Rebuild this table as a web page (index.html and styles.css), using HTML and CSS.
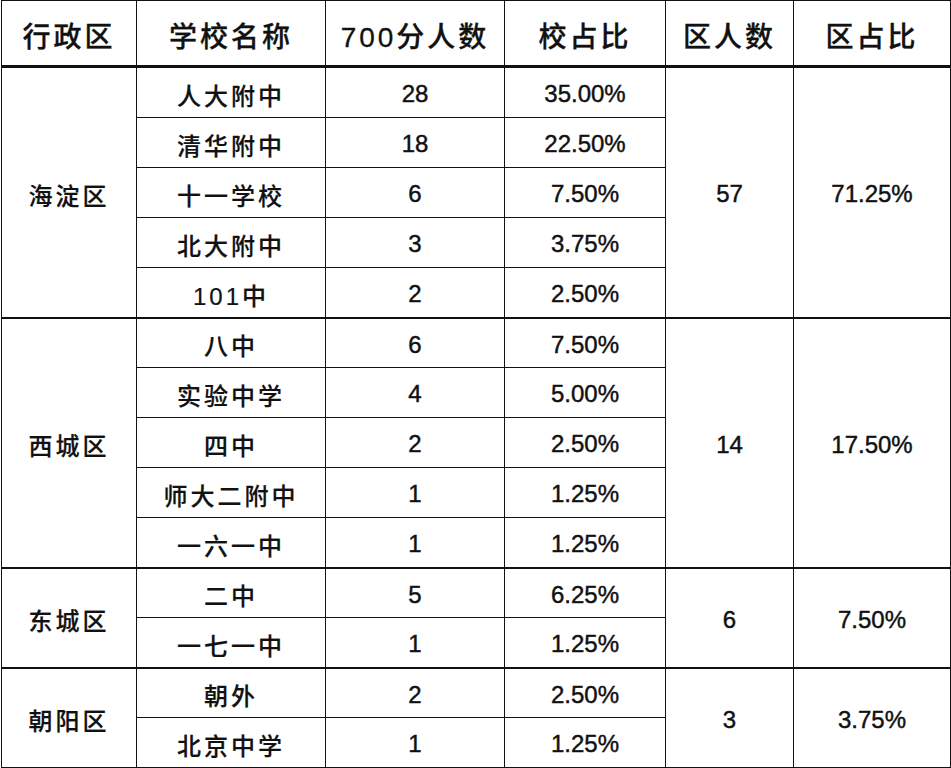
FILE: index.html
```html
<!DOCTYPE html>
<html lang="zh">
<head>
<meta charset="utf-8">
<link rel="stylesheet" href="styles.css">
</head>
<body>
<table class="stats">
  <colgroup>
    <col class="c1"><col class="c2"><col class="c3"><col class="c4"><col class="c5"><col class="c6">
  </colgroup>
  <thead>
    <tr class="head">
      <th>行政区</th><th>学校名称</th><th>700分人数</th><th>校占比</th><th>区人数</th><th>区占比</th>
    </tr>
  </thead>
  <tbody class="group">
    <tr><td rowspan="5" class="cjk">海淀区</td><td class="cjk">人大附中</td><td>28</td><td>35.00%</td><td rowspan="5">57</td><td rowspan="5">71.25%</td></tr>
    <tr><td class="cjk">清华附中</td><td>18</td><td>22.50%</td></tr>
    <tr><td class="cjk">十一学校</td><td>6</td><td>7.50%</td></tr>
    <tr><td class="cjk">北大附中</td><td>3</td><td>3.75%</td></tr>
    <tr><td class="cjk">101中</td><td>2</td><td>2.50%</td></tr>
  </tbody>
  <tbody class="group">
    <tr><td rowspan="5" class="cjk">西城区</td><td class="cjk">八中</td><td>6</td><td>7.50%</td><td rowspan="5">14</td><td rowspan="5">17.50%</td></tr>
    <tr><td class="cjk">实验中学</td><td>4</td><td>5.00%</td></tr>
    <tr><td class="cjk">四中</td><td>2</td><td>2.50%</td></tr>
    <tr><td class="cjk">师大二附中</td><td>1</td><td>1.25%</td></tr>
    <tr><td class="cjk">一六一中</td><td>1</td><td>1.25%</td></tr>
  </tbody>
  <tbody class="group">
    <tr><td rowspan="2" class="cjk">东城区</td><td class="cjk">二中</td><td>5</td><td>6.25%</td><td rowspan="2">6</td><td rowspan="2">7.50%</td></tr>
    <tr><td class="cjk">一七一中</td><td>1</td><td>1.25%</td></tr>
  </tbody>
  <tbody class="group">
    <tr><td rowspan="2" class="cjk">朝阳区</td><td class="cjk">朝外</td><td>2</td><td>2.50%</td><td rowspan="2">3</td><td rowspan="2">3.75%</td></tr>
    <tr><td class="cjk">北京中学</td><td>1</td><td>1.25%</td></tr>
  </tbody>
</table>
</body>
</html>
```

FILE: styles.css
```css
html, body {
  margin: 0;
  padding: 0;
  background: #ffffff;
}

.stats {
  margin: 0 0 0 1px;
  width: 949px;
  table-layout: fixed;
  border-collapse: collapse;
  font-family: "Liberation Sans", "Noto Sans CJK SC", sans-serif;
  color: #111;
  border: 1px solid #111;
}

.c1 { width: 135px; }
.c2 { width: 189px; }
.c3 { width: 179px; }
.c4 { width: 161px; }
.c5 { width: 128px; }
.c6 { width: 157px; }

.stats th,
.stats td {
  border: 1px solid #111;
  text-align: center;
  vertical-align: middle;
  padding: 3px 0 0 0;
  -webkit-text-stroke: 0.45px #111;
}

.head th {
  height: 61px;
  font-size: 28px;
  font-weight: 500;
  letter-spacing: 3px;
  border-bottom: 3px solid #111;
  -webkit-text-stroke: 0.3px #111;
}

.stats td {
  height: 46px;
  font-size: 24px;
}

.stats td.cjk {
  letter-spacing: 3px;
  font-weight: 500;
  -webkit-text-stroke: 0.2px #111;
}

.group + .group tr:first-child td {
  border-top: 2px solid #111;
  height: 45px;
}
```
